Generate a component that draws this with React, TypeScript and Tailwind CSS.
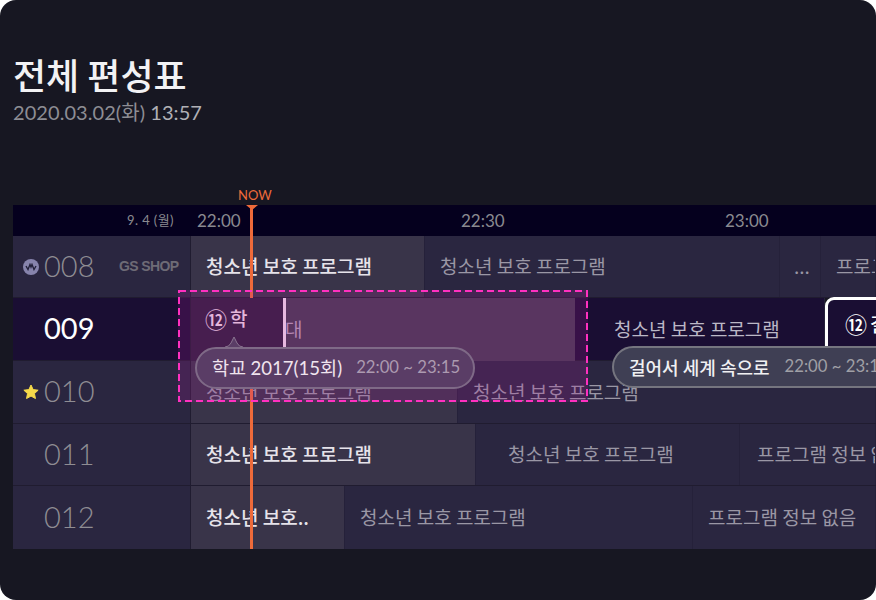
const F = "[font-family:'Lato','Noto_Sans_CJK_KR',sans-serif]";

function Cell({ w, tone, bold, bright, pl = 15, children }: { w: string; tone: string; bold?: boolean; bright?: boolean; pl?: number; children: React.ReactNode }) {
  return (
    <div className={`${w} ${tone} shrink-0 h-full flex items-center border-r border-[#25213a] overflow-hidden whitespace-nowrap text-[19px] font-['Noto_Sans_CJK_KR',sans-serif] ${bold ? "font-medium text-[#e6e3ea]" : bright ? "text-[#bcb8c6]" : "text-[#9a97a5]"}`} style={{ paddingLeft: pl }}>
      {children}
    </div>
  );
}

function Channel({ num, icon, active, logo }: { num: string; icon?: React.ReactNode; active?: boolean; logo?: boolean }) {
  return (
    <div className={`w-[178px] shrink-0 h-full flex items-center relative border-r border-[#201c30] ${active ? "bg-[#1a0e33]" : "bg-[#2a2640]"}`}>
      <div className="w-[10px]" />
      <div className="w-[16px] flex justify-center">{icon}</div>
      <span className={`ml-[5px] text-[29px] pb-[2px] ${active ? "text-white font-normal" : "text-[#8f8d93] font-light"}`}>{num}</span>
      {logo && <span className="absolute left-[106px] text-[14px] font-bold text-[#6e6b76] font-['Liberation_Sans',sans-serif] tracking-[-0.6px]">GS SHOP</span>}
    </div>
  );
}

const ROW = "flex w-full border-b border-[#201c30]";
const HI = "bg-[#393449]";
const LO = "bg-[#2a2640]";
const DARK = "bg-[#1a0e33]";

export default function App() {
  return (
    <div className="w-[876px] h-[600px] bg-white overflow-hidden">
      <div className={`relative w-[876px] h-[600px] rounded-[16px] bg-[#171722] overflow-hidden ${F}`}>
        <div className="pl-[13px] pt-[50px]">
          <h1 className="text-[36px] leading-[48px] font-medium text-[#f2f2f4] font-['Noto_Sans_CJK_KR',sans-serif]">전체 편성표</h1>
          <p className="text-[20px] leading-[28px] tracking-[0.06px] text-[#8d8d94]">2020.03.02(화) <span className="text-[#b0b0b5]">13:57</span></p>
        </div>

        <div className="ml-[13px] mt-[79px] relative w-[863px]">
          <div className="absolute left-[225px] -top-[18px] text-[13px] leading-[16px] text-[#ee6a3a]">NOW</div>
          <div className="h-[31px] bg-[#05001e] relative flex items-center text-[17px] text-[#8a8a90]">
            <span className="absolute left-[114px] text-[13px] tracking-[0.4px]">9. 4 (월)</span>
            <span className="absolute left-[184px]">22:00</span>
            <span className="absolute left-[448px]">22:30</span>
            <span className="absolute left-[712px]">23:00</span>
          </div>

          <div className={`${ROW} h-[62px]`}>
            <Channel num="008" logo icon={<span className="w-[16px] h-[16px] rounded-full bg-[#8784ac] flex items-center justify-center"><svg width="12" height="8" viewBox="0 0 12 8" fill="none" stroke="#23213a" strokeWidth="1.4"><path d="M1 3 L3 6.5 L5 1.5 L6 4 L7 1.5 L9 6.5 L11 3" /></svg></span>} />
            <Cell w="w-[234px]" tone={HI} bold>청소년 보호 프로그램</Cell>
            <Cell w="w-[355px]" tone={LO}>청소년 보호 프로그램</Cell>
            <Cell w="w-[41px]" tone={LO} pl={14}>...</Cell>
            <Cell w="w-[55px]" tone={LO}>프로그램</Cell>
          </div>

          <div className={`${ROW} h-[63px]`}>
            <Channel num="009" active />
            <Cell w="w-[92px]" tone={DARK}><span /></Cell>
            <Cell w="w-[292px]" tone={DARK} pl={3}><span /></Cell>
            <Cell w="w-[250px]" tone={DARK} pl={39} bright>청소년 보호 프로그램</Cell>
            <div className="w-[51px] shrink-0" />
          </div>

          <div className={`${ROW} h-[63px]`}>
            <Channel num="010" icon={<svg width="16" height="16" viewBox="0 0 24 24" fill="#f6d94a"><path d="M12 1.5l3.2 6.9 7.5.9-5.5 5.1 1.5 7.4L12 18.1l-6.7 3.7 1.5-7.4L1.3 9.3l7.5-.9z" strokeLinejoin="round" stroke="#f6d94a" strokeWidth="1.5" /></svg>} />
            <Cell w="w-[267px]" tone={HI}>청소년 보호 프로그램</Cell>
            <Cell w="w-[418px]" tone={LO}>청소년 보호 프로그램</Cell>
          </div>

          <div className={`${ROW} h-[62px]`}>
            <Channel num="011" />
            <Cell w="w-[285px]" tone={HI} bold>청소년 보호 프로그램</Cell>
            <Cell w="w-[264px]" tone={LO} pl={32}>청소년 보호 프로그램</Cell>
            <Cell w="w-[136px]" tone={LO} pl={17}>프로그램 정보 없음</Cell>
          </div>

          <div className="flex w-full h-[63px]">
            <Channel num="012" />
            <Cell w="w-[154px]" tone={HI} bold>청소년 보호..</Cell>
            <Cell w="w-[348px]" tone={LO}>청소년 보호 프로그램</Cell>
            <Cell w="w-[183px]" tone={LO}>프로그램 정보 없음</Cell>
          </div>

          {/* now line */}
          <div className="absolute left-[237px] top-0 bottom-0 w-[3px] bg-[#ee6a3a]" />
          <div className="absolute left-[233px] top-0 w-0 h-0 border-x-[6px] border-x-transparent border-t-[5px] border-t-[#ee6a3a]" />

          {/* selected highlight blocks */}
          <div className="absolute left-[178px] top-[93px] w-[92px] h-[63px] bg-[#2c1f3b]" />
          <div className="absolute left-[270px] top-[93px] w-[292px] h-[63px] bg-[#433b50] flex items-center text-[19px] text-[#b4a0b8] pl-[2px] font-['Noto_Sans_CJK_KR',sans-serif]">
            대
            <div className="absolute left-0 top-0 bottom-0 w-[3px] bg-[#f4e0f0]" />
          </div>
          <div className="absolute left-[178px] top-[93px] w-[92px] h-[41px] flex items-center pl-[14px] gap-[3px] text-[19px] font-medium text-[#f0dcea] font-['Noto_Sans_CJK_KR',sans-serif]">
            <span className="text-[22px] font-medium">⑫</span>학
          </div>

          {/* dashed overlay */}
          <div className="absolute left-[165px] top-[85px] w-[410px] h-[112px] bg-[#b41ea0]/20">
            <svg width="410" height="112" className="absolute inset-0">
              <rect x="1" y="1" width="408" height="110" fill="none" stroke="#ff30c0" strokeWidth="2" strokeDasharray="7 4" />
            </svg>
          </div>

          {/* focused program */}
          <div className="absolute left-[812px] top-[92px] w-[70px] h-[70px] rounded-[9px] border-[3px] border-white bg-[#1a0e33] flex items-start pt-[10px] pl-[17px] gap-[3px] text-[19px] font-medium text-white whitespace-nowrap font-['Noto_Sans_CJK_KR',sans-serif]">
            <span className="text-[22px] font-medium leading-[26px]">⑫</span>걸
          </div>

          {/* tooltips */}
          <svg width="18" height="12" viewBox="0 0 18 12" className="absolute left-[212px] top-[131px]">
            <path d="M0 11 Q4 11 6 7 L9 1 L12 7 Q14 11 18 11 L18 12 L0 12Z" fill="#5a3d66" stroke="#8a7490" strokeWidth="1" />
          </svg>
          <div className="absolute left-[182px] top-[142px] h-[42px] w-[280px] rounded-full bg-[#5a3d66] border-2 border-[#7f6a87] flex items-center pl-[15px] whitespace-nowrap font-['Noto_Sans_CJK_KR',sans-serif]">
            <span className="text-[18.6px] text-[#f0e4ee]">학교 <span className="font-['Lato',sans-serif]">2017(15</span>회<span className="font-['Lato',sans-serif]">)</span></span>
            <span className="ml-[14px] text-[16.7px] text-[#ac9ab0] font-['Lato',sans-serif]">22:00 ~ 23:15</span>
          </div>
          <div className="absolute left-[599px] top-[141px] h-[42px] w-[290px] rounded-full bg-[#3f3f54] border-2 border-[#75757f] flex items-center pl-[15px] whitespace-nowrap font-['Noto_Sans_CJK_KR',sans-serif]">
            <span className="text-[18px] font-medium text-[#f0f0f2]">걸어서 세계 속으로</span>
            <span className="ml-[15px] text-[16.7px] text-[#a0a0a6] font-['Lato',sans-serif]">22:00 ~ 23:15</span>
          </div>
        </div>
      </div>
    </div>
  );
}
